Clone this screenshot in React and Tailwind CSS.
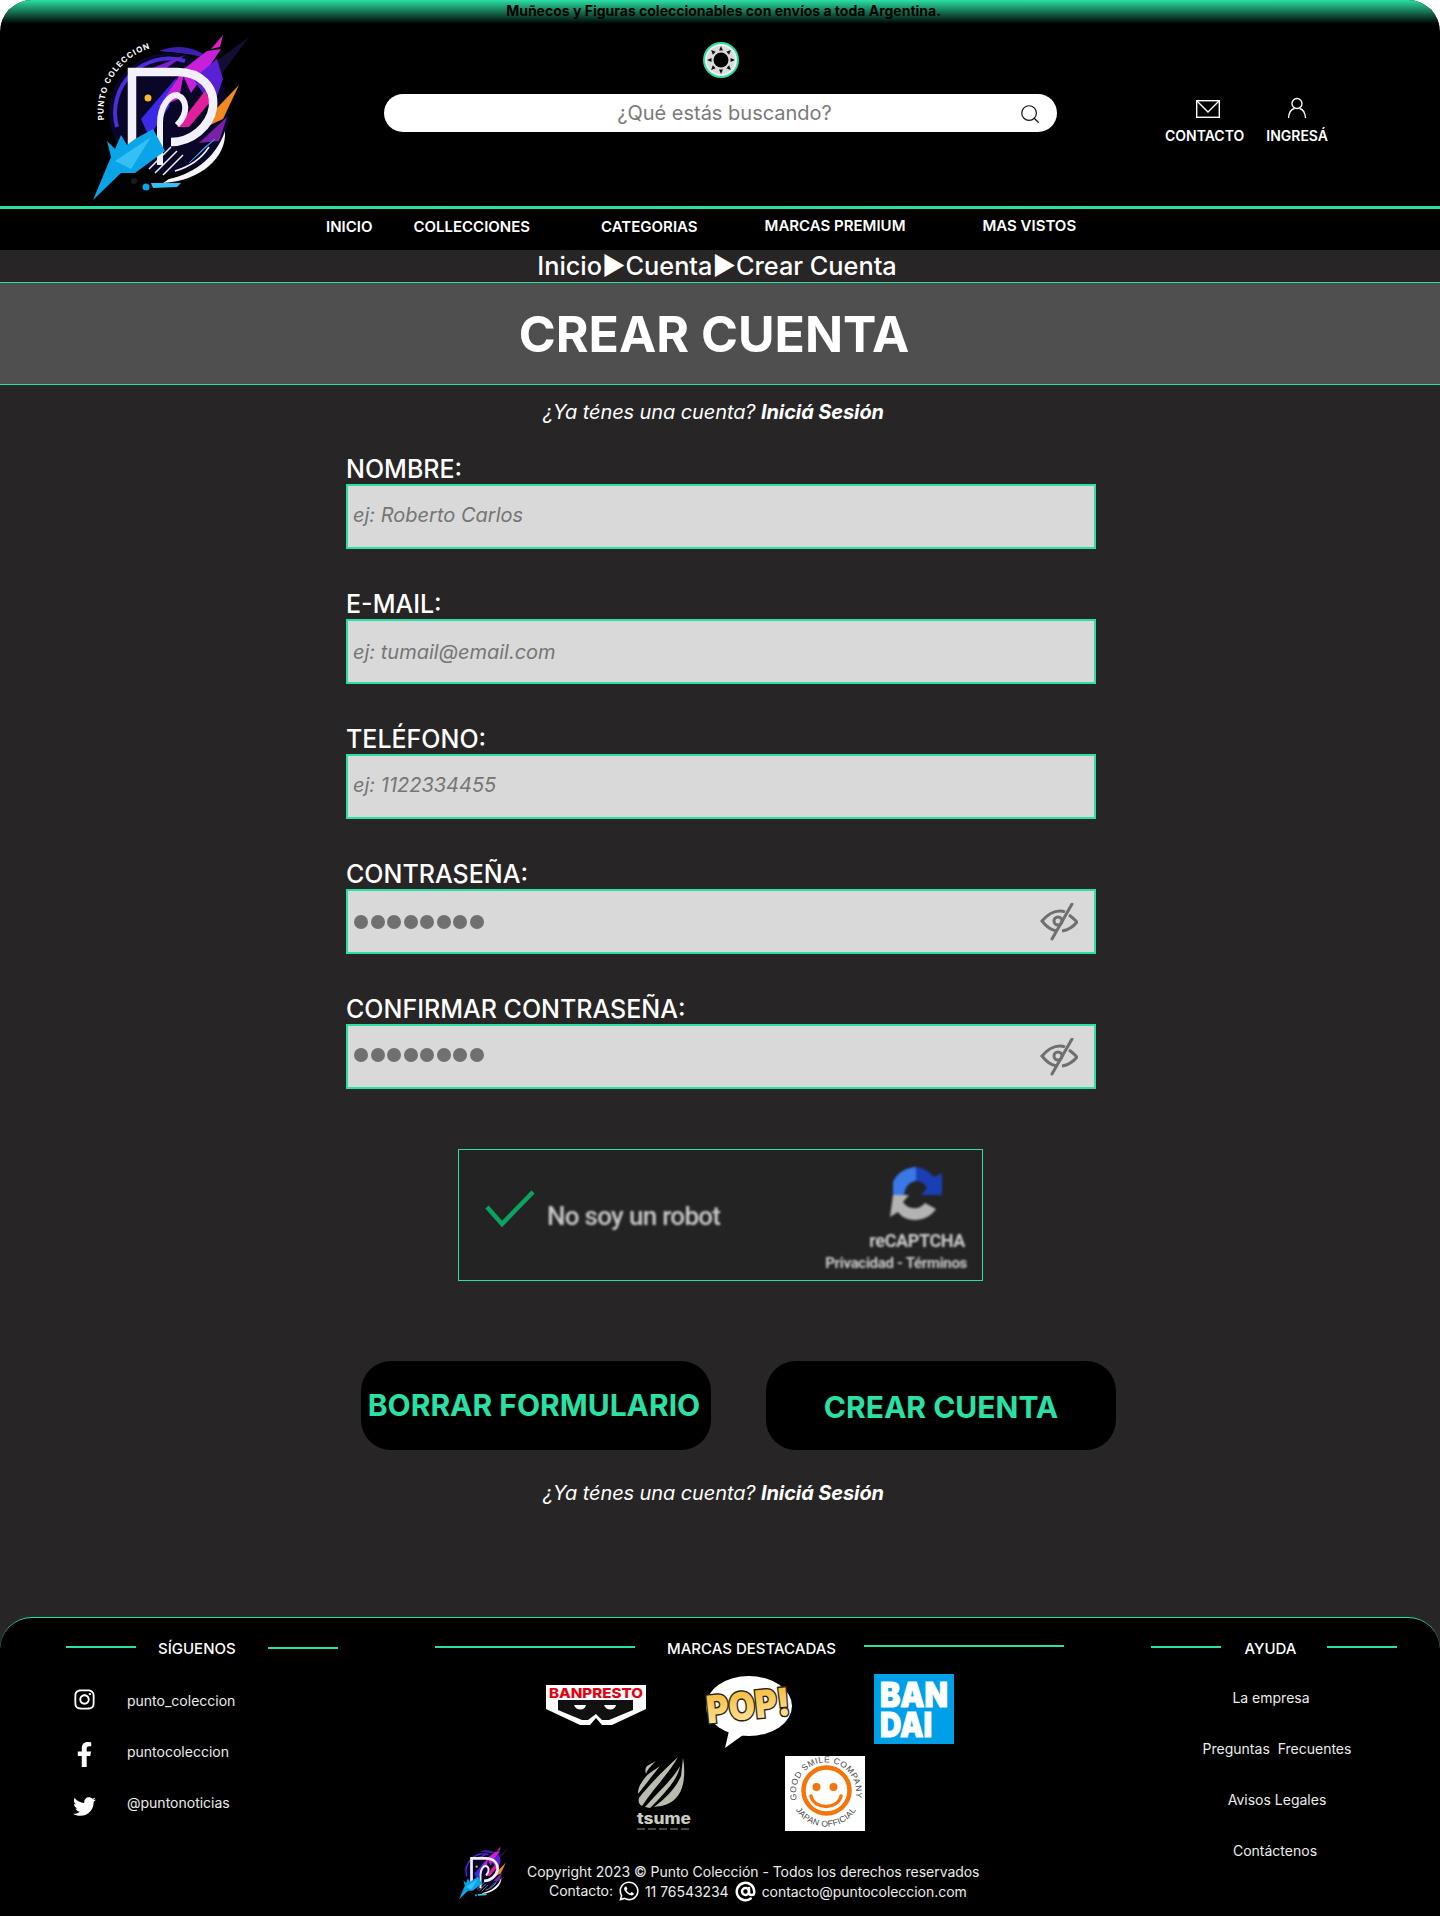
import { Search, AtSign } from 'lucide-react';
import { FaInstagram, FaFacebookF, FaTwitter, FaWhatsapp } from 'react-icons/fa';

const BrandLogo = ({ className, showText = true }) => (
  <svg viewBox="0 0 162 165" className={className}>
    <circle cx="76" cy="78" r="60" fill="#0a0628" />
    <path d="M24 92 A54 54 0 0 1 92 26" fill="none" stroke="#4a2fd8" strokeWidth="4" />
    <path d="M66 16 C86 8 104 12 120 26 C100 18 84 18 66 16 Z" fill="#3a1fb0" />
    <path d="M52 36 L92 20 L72 34 Z" fill="#7a1fd0" />
    <path d="M88 36 L114 16 L128 14 L116 32 L98 58 Z" fill="#c81fd8" />
    <path d="M118 14 L130 0 L127 12 Z" fill="#e020c0" />
    <path d="M118 30 L156 2 L128 40 Z" fill="#120e34" />
    <path d="M100 44 L124 24 L130 44 L120 72 Z" fill="#5a20d8" />
    <path d="M48 84 L84 42 L76 72 L56 102 Z" fill="#3a2ae8" />
    <path d="M66 72 L92 32 L86 64 Z" fill="#d01fd0" />
    <path d="M84 92 L112 56 L118 66 L96 92 Z" fill="#e0209a" />
    <path d="M100 98 L146 50 L130 84 Z" fill="#f08a20" />
    <path d="M106 108 L134 82 L126 106 Z" fill="#7a1fa8" />
    <path d="M96 128 L122 104 L112 112 Z" fill="#3a90d8" stroke="#3a90d8" />
    <circle cx="55" cy="63" r="3.500" fill="#f5b82e" />
    <path d="M39 114 V37 H84 C108 37 122 52 120 72 C117 92 98 107 78 107" fill="none" stroke="#f2f0f8" strokeWidth="8.500" />
    <path d="M67 130 V88 C67 72 76 60 84 60 C94 64 96 78 84 90" fill="none" stroke="#f2f0f8" strokeWidth="6" />
    <path d="M0 165 L18 122 L14 106 L22 114 L28 100 L34 110 L42 104 L60 94 L72 116 L42 138 L28 138 Z" fill="#0aa5e8" />
    <path d="M22 126 L58 102 L38 134 Z" fill="#35c0f5" />
    <path d="M132 96 C134 122 108 146 70 148 L76 144 C104 138 124 120 132 96 Z" fill="#f5f5fa" />
    <path d="M116 112 C108 124 96 132 82 136" fill="none" stroke="#f5f5fa" strokeWidth="1.500" />
    <path d="M56 134 L78 112 M62 138 L84 116 M70 140 L90 120" stroke="#e8f4fa" strokeWidth="1.500" />
    <circle cx="53" cy="152" r="3.500" fill="#0aa5e8" />
    <circle cx="41" cy="146" r="3" fill="#1a1a1a" />
    <path d="M58 148 L88 148 L84 152 L60 153 Z" fill="#35c0f5" />
    {showText && (
      <>
        <defs>
          <path id="logoArc" d="M11 85 A66 66 0 0 1 68 11" />
        </defs>
        <text fontFamily="Inter, sans-serif" fontSize="8" fontWeight="700" fill="#fff" letterSpacing="1">
          <textPath href="#logoArc">PUNTO COLECCION</textPath>
        </text>
      </>
    )}
  </svg>
);

const SunToggle = () => (
  <svg viewBox="0 0 36 36" className="w-[36px] h-[36px]">
    <circle cx="18" cy="18" r="17" fill="#f2f2f2" stroke="#2ae0a4" strokeWidth="2" />
    <circle cx="18" cy="18" r="14" fill="#c4c4c4" opacity="0.5" />
    <circle cx="18" cy="18" r="7.500" fill="#000" />
    {[0, 45, 90, 135, 180, 225, 270, 315].map((a) => (
      <path key={a} d="M16 8.500 L20 8.500 L18 4 Z" fill="#111" transform={`rotate(${a} 18 18)`} />
    ))}
  </svg>
);

const EyeOff = () => (
  <svg viewBox="0 0 38 38" className="w-[38px] h-[38px]" fill="none" stroke="#6f6f6f" strokeWidth="3">
    <path d="M17 28 C10 27 5 22 2 18 C7 12 13 8 20 8 C22 8 24 8.500 25 9" />
    <path d="M29 12 C32 14 34 16 37 19 C33 24 28 27 22 28" />
    <circle cx="18" cy="18" r="4" />
    <path d="M32 1 L12 36" strokeLinecap="round" />
  </svg>
);

const Field = ({ label, placeholder, shiftUp }) => (
  <div className="mb-[40px]">
    <div className="h-[30px] text-[25px] leading-[30px] font-medium text-white">{label}</div>
    <input
      placeholder={placeholder}
      className={`w-full h-[65px] px-[5px] bg-[#d9d9d9] border-2 border-[#2ae0a4] text-[20px] italic outline-none placeholder:text-[#757575] ${shiftUp ? 'pb-[4px]' : ''}`}
    />
  </div>
);

const PasswordField = ({ label, last }) => (
  <div className={last ? '' : 'mb-[40px]'}>
    <div className="h-[30px] text-[25px] leading-[30px] font-medium text-white">{label}</div>
    <div className="relative h-[65px] pl-[6px] pr-[16px] flex items-center justify-between bg-[#d9d9d9] border-2 border-[#2ae0a4]">
      <div className={`flex gap-[2.5px] ${last ? '-mt-[4px]' : ''}`}>
        {[0, 1, 2, 3, 4, 5, 6, 7].map((i) => (
          <span key={i} className="w-[14px] h-[14px] rounded-full bg-[#707070]" />
        ))}
      </div>
      <EyeOff />
    </div>
  </div>
);

const LoginHint = () => (
  <p className="text-[20px] leading-[28px] italic text-white text-center pr-[13px]">
    <span className="tracking-[-0.1px]">¿Ya ténes una cuenta? </span>
    <span className="font-bold tracking-[-0.1px]">Iniciá Sesión</span>
  </p>
);

const FooterTitle = ({ title, leftW, rightW, gapL, gapR, rightUp, rightDown }) => (
  <div className="h-[20px] flex items-center text-[15px] font-medium text-white">
    <span className="h-[2px] bg-[#2ae0a4]" style={{ width: leftW, marginRight: gapL, marginTop: -2 }} />
    <span className="translate-y-px">{title}</span>
    <span
      className="h-[2px] bg-[#2ae0a4]"
      style={{ width: rightW, marginLeft: gapR, marginTop: rightUp ? -4 : rightDown ? 0 : -2 }}
    />
  </div>
);

const Banpresto = () => (
  <svg viewBox="0 0 100 40" className="w-[100px] h-[40px] mt-[11px]">
    <path d="M0 0 H100 V24 L66 40 H56 L50 33 L44 40 H34 L0 24 Z" fill="#fff" />
    <text x="3" y="13" fontFamily="Inter, sans-serif" fontWeight="800" fontSize="13.500" fill="#e60012" textLength="94" lengthAdjust="spacingAndGlyphs">BANPRESTO</text>
    <path d="M12 15 H87 V25 L63 35 L56 35 L50 29 L42 35 L36 35 L12 25 Z" fill="#111" />
    <path d="M28 20 H40 C39 26 30 26 28 20 Z M58 20 H70 C69 26 60 26 58 20 Z" fill="#fff" />
  </svg>
);

const FunkoPop = () => (
  <svg viewBox="0 0 88 73" className="w-[88px] h-[73px] mt-[1px] ml-[59px]">
    <defs>
      <linearGradient id="popFill" x1="0" y1="0" x2="0" y2="1">
        <stop offset="0" stopColor="#f6b42a" />
        <stop offset="1" stopColor="#fdeaa8" />
      </linearGradient>
    </defs>
    <ellipse cx="44" cy="31" rx="43" ry="30" fill="#fff" />
    <path d="M24 56 L20 73 L38 60 Z" fill="#fff" />
    <text x="43" y="44" textAnchor="middle" fontFamily="Inter, sans-serif" fontWeight="900" fontSize="38" fill="url(#popFill)" stroke="#2a2418" strokeWidth="3" paintOrder="stroke" textLength="84" lengthAdjust="spacingAndGlyphs" transform="rotate(-6 44 30)">POP!</text>
  </svg>
);

const Bandai = () => (
  <svg viewBox="0 0 80 70" className="w-[80px] h-[70px] ml-[81px]">
    <rect width="80" height="70" fill="#00a0e9" />
    <text x="6" y="33" fontFamily="Inter, sans-serif" fontWeight="900" fontSize="34" fill="#fff" stroke="#fff" strokeWidth="1" textLength="68" lengthAdjust="spacingAndGlyphs">BAN</text>
    <text x="6" y="63" fontFamily="Inter, sans-serif" fontWeight="900" fontSize="34" fill="#fff" stroke="#fff" strokeWidth="1" textLength="52" lengthAdjust="spacingAndGlyphs">DAI</text>
  </svg>
);

const Tsume = () => (
  <svg viewBox="0 0 56 76" className="w-[56px] h-[76px] ml-[201px]" fill="#b9bdb0">
    <path d="M11 10 L20 5 C14 11 11 14 10 18 C9 15 9 12 11 10 Z" />
    <path d="M6 26 C12 16 18 15 24 10 C16 20 10 28 2 38 C2 33 3 30 6 26 Z" />
    <path d="M3 42 C12 30 28 14 42 1 C34 16 18 32 6 50 C3 48 2 46 3 42 Z" />
    <path d="M9 51 C22 36 38 22 44 10 C42 24 26 40 14 52 Z" />
    <path d="M18 51 C30 42 40 32 45 20 L47 2 C50 18 48 36 38 44 C32 49 26 50 18 51 Z" />
    <text x="28" y="68" textAnchor="middle" fontFamily="Inter, sans-serif" fontWeight="800" fontSize="15" fill="#c9ccc0" textLength="54" lengthAdjust="spacingAndGlyphs">tsume</text>
    <path d="M1 73 H55" stroke="#8a8d82" strokeWidth="1" strokeDasharray="8 3" />
  </svg>
);

const GoodSmile = () => (
  <svg viewBox="0 0 80 75" className="w-[80px] h-[75px] ml-[93px]">
    <rect width="80" height="75" fill="#fff" />
    <defs>
      <path id="gscTop" d="M12 44 A30 30 0 1 1 70 44" />
      <path id="gscBottom" d="M8 49 A36 36 0 0 0 74 49" />
    </defs>
    <text fontFamily="Liberation Sans, sans-serif" fontSize="8.500" fill="#444" letterSpacing="0.500">
      <textPath href="#gscTop">GOOD SMILE COMPANY</textPath>
    </text>
    <text fontFamily="Liberation Sans, sans-serif" fontSize="8.500" fill="#444" textAnchor="middle" letterSpacing="0.300">
      <textPath href="#gscBottom" startOffset="50%">JAPAN OFFICIAL</textPath>
    </text>
    <circle cx="41.500" cy="34.500" r="23" fill="none" stroke="#f5750a" strokeWidth="4.500" />
    <circle cx="31.500" cy="31" r="4" fill="#f5750a" />
    <circle cx="48.500" cy="31" r="4" fill="#f5750a" />
    <path d="M26 40 C29 54 53 54 56 40" fill="none" stroke="#f5750a" strokeWidth="3.500" strokeLinecap="round" />
  </svg>
);

const RecaptchaMark = () => (
  <svg viewBox="0 0 54 54" className="w-[54px] h-[54px] blur-[0.8px]">
    <path d="M4 28 V15 C8 6 16 1 27 0 V14 C20 15 16 20 15 28 Z" fill="#3b78e7" />
    <path d="M27 0 C35 1 41 5 45 10 L53 6 V28 H32 L38 21 C36 17 32 14 27 14 Z" fill="#1a3fb5" />
    <path d="M4 28 H20 L14 35 C18 42 30 44 36 36 L47 42 C38 56 16 56 9 45 L1 50 Z" fill="#b3b3b3" />
  </svg>
);

export default function App() {
  return (
    <div className="w-[1440px] h-[1916px] overflow-hidden bg-white font-['Inter',sans-serif]">
      {/* header */}
      <header className="h-[206px] rounded-t-[32px] bg-black overflow-hidden">
        <div className="h-[24px] bg-linear-to-b/srgb from-[#2ae0a4] to-black text-center text-[14px] leading-[22px] font-bold text-black pl-[7px]">
          Muñecos y Figuras coleccionables con envíos a toda Argentina.
        </div>
        <div className="flex pl-[93px]">
          <BrandLogo className="w-[162px] h-[165px] mt-[11px] shrink-0" />
          <div className="w-[673px] ml-[129px] flex flex-col items-center pt-[18px]">
            <SunToggle />
            <div className="relative mt-[16px] w-full h-[38px] rounded-full bg-white flex items-center justify-center pl-[8px] text-[20px] text-[#7a7a7a]">
              ¿Qué estás buscando?
              <Search className="absolute right-[16px] top-[9px] w-[22px] h-[22px] text-[#111]" strokeWidth={1.3} />
            </div>
          </div>
          <div className="ml-[108px] flex gap-[22px] pt-[76px] text-[14px] font-semibold text-white">
            <div className="flex flex-col items-center">
              <svg viewBox="0 0 24 18" className="w-[24px] h-[18px] ml-[6px]" fill="none" stroke="#fff" strokeWidth="1.400">
                <rect x="0.700" y="0.700" width="22.600" height="16.600" />
                <path d="M1 1 L12 12 L23 1" />
              </svg>
              <span className="mt-[8px] leading-[20px]">CONTACTO</span>
            </div>
            <div className="flex flex-col items-center -mt-[3px]">
              <svg viewBox="0 0 20 22" className="w-[20px] h-[22px]" fill="none" stroke="#fff" strokeWidth="1.300">
                <circle cx="10" cy="6.500" r="5" />
                <path d="M1.500 21 C2 15 5 12 7.500 11.500 M18.500 21 C18 15 15 12 12.500 11.500" />
              </svg>
              <span className="mt-[7px] leading-[20px]">INGRESÁ</span>
            </div>
          </div>
        </div>
      </header>

      {/* nav */}
      <nav className="h-[44px] border-t-[3px] border-[#2ae0a4] bg-black flex items-center pl-[326px] pb-[4px] text-[15px] font-semibold text-white">
        <a>INICIO</a>
        <a className="ml-[41px]">COLLECCIONES</a>
        <a className="ml-[71px]">CATEGORIAS</a>
        <a className="ml-[67px] -mt-[2px]">MARCAS PREMIUM</a>
        <a className="ml-[77px] -mt-[2px]">MAS VISTOS</a>
      </nav>

      <main className="h-[1367px] bg-[#272526]">
        <div className="h-[32px] text-center text-[25.3px] leading-[32px] font-medium text-white pr-[6px]">
          Inicio▶Cuenta▶Crear Cuenta
        </div>
        <div className="h-[103px] border-y border-[#2ae0a4] bg-[#4f4f4f] flex items-center justify-center pr-[12px] pt-[2px] text-[50px] font-bold text-white">
          CREAR CUENTA
        </div>

        <div className="mt-[13px]">
          <LoginHint />
        </div>

        <form className="w-[750px] ml-[346px] mt-[28px]">
          <Field label="NOMBRE:" placeholder="ej: Roberto Carlos" shiftUp />
          <Field label="E-MAIL:" placeholder="ej: tumail@email.com" />
          <Field label="TELÉFONO:" placeholder="ej: 1122334455" shiftUp />
          <PasswordField label="CONTRASEÑA:" />
          <PasswordField label="CONFIRMAR CONTRASEÑA:" last />
        </form>

        {/* captcha */}
        <div className="w-[525px] h-[132px] ml-[458px] mt-[60px] border border-[#2ae0a4] bg-[#232323] flex">
          <svg viewBox="0 0 50 38" className="w-[50px] h-[38px] ml-[26px] mt-[40px]" fill="none" stroke="#0aa35f" strokeWidth="4.500">
            <path d="M2 17 L17 34 L48 2" />
          </svg>
          <span className="ml-[12px] mt-[50px] h-[32px] font-['Roboto',sans-serif] font-medium text-[26px] leading-[32px] tracking-[-0.7px] text-[#c9c9c9] blur-[1px]">
            No soy un robot
          </span>
          <div className="ml-auto pr-[15px] pt-[17px] flex flex-col items-end font-['Roboto',sans-serif] text-[#c9c9c9] font-bold">
            <div className="mr-[24px]">
              <RecaptchaMark />
            </div>
            <span className="mt-[10px] mr-[2px] text-[18px] leading-[20px] tracking-[-0.4px] blur-[0.8px]">reCAPTCHA</span>
            <span className="mt-[4px] text-[15px] leading-[16px] tracking-[-0.3px] blur-[0.8px]">Privacidad - Términos</span>
          </div>
        </div>

        <div className="flex ml-[361px] mt-[80px] gap-[55px]">
          <button className="w-[350px] h-[89px] pr-[4px] rounded-[30px] bg-black text-[30px] font-bold whitespace-nowrap text-[#2ae0a4]">
            BORRAR FORMULARIO
          </button>
          <button className="w-[350px] h-[89px] pt-[3px] rounded-[30px] bg-black text-[30px] font-bold whitespace-nowrap text-[#2ae0a4]">
            CREAR CUENTA
          </button>
        </div>

        <div className="mt-[29px]">
          <LoginHint />
        </div>
      </main>

      <div className="bg-[#272526]">
        <footer className="h-[299px] rounded-t-[32px] border-t border-[#2ae0a4] bg-black flex pl-[66px] pt-[20px] text-[14px] text-[#ececec]">
          <div className="w-[272px]">
            <FooterTitle title="SÍGUENOS" leftW={70} rightW={70} gapL={22} gapR={32} rightDown />
            <div className="mt-[25px] pl-[7px]">
              <div className="h-[51px] flex items-start">
                <FaInstagram className="w-[23px] h-[23px] mt-[5px] text-white" />
                <span className="ml-[31px] mt-[7px]">punto_coleccion</span>
              </div>
              <div className="h-[51px] flex items-start">
                <FaFacebookF className="w-[23px] h-[25px] mt-[8px] text-white" />
                <span className="ml-[31px] mt-[7px]">puntocoleccion</span>
              </div>
              <div className="h-[51px] flex items-start">
                <FaTwitter className="w-[23px] h-[23px] mt-[10px] text-white" />
                <span className="ml-[31px] mt-[7px]">@puntonoticias</span>
              </div>
            </div>
          </div>

          <div className="w-[631px] ml-[97px]">
            <FooterTitle title="MARCAS DESTACADAS" leftW={200} rightW={200} gapL={32} gapR={28} rightUp />
            <div className="mt-[16px] h-[82px] flex items-start pl-[111px]">
              <Banpresto />
              <FunkoPop />
              <Bandai />
            </div>
            <div className="h-[76px] flex items-start">
              <Tsume />
              <GoodSmile />
            </div>
            <div className="mt-[14px] flex items-start pl-[24px]">
              <BrandLogo className="w-[52px] h-[54px] shrink-0" showText={false} />
              <div className="ml-[16px] mt-[17px] whitespace-nowrap tracking-[-0.04px]">
                <div className="leading-[18px]">Copyright 2023 © Punto Colección - Todos los derechos reservados</div>
                <div className="flex items-center pl-[22px] h-[20px]">
                  <span className="-mt-[2px]">Contacto:</span>
                  <FaWhatsapp className="w-[22px] h-[22px] mx-[5px] text-white" />
                  <span>11 76543234</span>
                  <AtSign className="w-[21px] h-[21px] mx-[6px] text-white" strokeWidth={2.8} />
                  <span>contacto@puntocoleccion.com</span>
                </div>
              </div>
            </div>
          </div>

          <div className="w-[246px] ml-[85px]">
            <FooterTitle title="AYUDA" leftW={70} rightW={70} gapL={24} gapR={31} />
            <div className="mt-[14px] text-center whitespace-pre">
              <div className="h-[51px] leading-[51px] pr-[6px]">La empresa</div>
              <div className="h-[51px] leading-[51px] pl-[6px]">Preguntas  Frecuentes</div>
              <div className="h-[51px] leading-[51px] pl-[6px]">Avisos Legales</div>
              <div className="h-[51px] leading-[51px] pl-[2px]">Contáctenos</div>
            </div>
          </div>
        </footer>
      </div>
    </div>
  );
}
